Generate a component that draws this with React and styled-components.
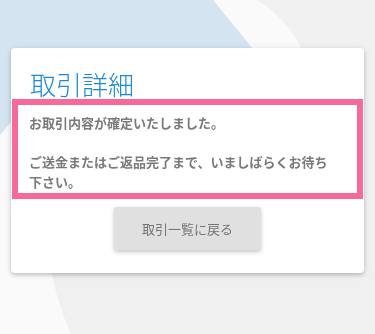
import React from 'react';
import styled, { createGlobalStyle } from 'styled-components';

const GlobalStyle = createGlobalStyle`
  html, body {
    margin: 0;
    padding: 0;
    background: #f0f0f0;
  }

  body {
    font-family: "Noto Sans CJK JP", "Noto Sans", sans-serif;
  }

  * {
    box-sizing: border-box;
  }
`;

const Backdrop = () => (
  <BackdropSvg viewBox="0 0 375 334" preserveAspectRatio="none" aria-hidden="true">
    <path
      d="M0 0 H257 C282 16 296 34 306 58 L46 240 C50 272 58 306 71 334 H0 Z"
      fill="#fafafa"
    />
    <polygon points="0,0 213,0 262,60 60,63 0,135" fill="#d4e4f0" />
  </BackdropSvg>
);

export default function App() {
  return (
    <>
      <GlobalStyle />
      <Backdrop />
      <Page>
        <Card>
          <Title>取引詳細</Title>
          <Notice>
            お取引内容が確定いたしました。
            <br />
            <br />
            ご送金またはご返品完了まで、いましばらくお待ち下さい。
          </Notice>
          <Actions>
            <BackButton type="button">取引一覧に戻る</BackButton>
          </Actions>
        </Card>
      </Page>
    </>
  );
}

const BackdropSvg = styled.svg`
  position: fixed;
  top: 0;
  left: 0;
  width: 375px;
  height: 334px;
  z-index: 0;
`;

const Page = styled.main`
  position: relative;
  z-index: 1;
  min-height: 334px;
  padding: 48px 11px 0;
`;

const Card = styled.section`
  background: #fff;
  border-radius: 4px;
  box-shadow: 0 2px 4px rgba(0, 0, 0, 0.2), 0 1px 8px rgba(0, 0, 0, 0.08);
  padding: 20px 0 23px;
`;

const Title = styled.h1`
  margin: 0;
  padding-left: 19px;
  font-size: 26px;
  line-height: 31px;
  font-weight: 300;
  color: #1a8ad8;
`;

const Notice = styled.p`
  margin: 0 1px;
  border: 6px solid #f66a99;
  padding: 8px 24px 2px 11px;
  font-size: 13px;
  line-height: 19.5px;
  font-weight: 700;
  color: #7a7a7a;
`;

const Actions = styled.div`
  display: flex;
  justify-content: center;
  padding-top: 8px;
`;

const BackButton = styled.button`
  width: 147px;
  height: 43px;
  border: none;
  border-radius: 2px;
  background: #e0e0e0;
  box-shadow: 0 2px 4px rgba(0, 0, 0, 0.22);
  font-family: "Noto Sans CJK JP", "Noto Sans", sans-serif;
  font-size: 13px;
  font-weight: 400;
  color: #757575;
  cursor: pointer;
`;
